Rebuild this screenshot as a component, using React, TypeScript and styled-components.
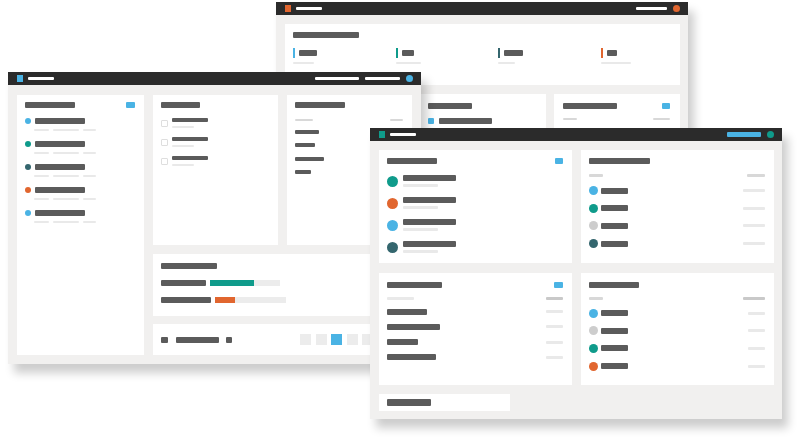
import React from "react";
import styled, { createGlobalStyle } from "styled-components";

const C = {
  dark: "#5b5b5b",
  chrome: "#2b2b2b",
  bg: "#f1f0ef",
  blue: "#4ab3e4",
  teal: "#0f9b8b",
  slate: "#34666e",
  orange: "#e1662f",
  grey: "#cdcdcd",
  line: "#d8d8d8",
  lineDark: "#c9c9c9",
  faint: "#e9e9e9",
  track: "#ececec",
};

const Global = createGlobalStyle`
  *, *::before, *::after { box-sizing: border-box; }
  html, body { margin: 0; padding: 0; background: #fff; font-family: "Liberation Sans", Arial, sans-serif; }
  #root { width: 800px; height: 440px; }
`;

const Desktop = styled.div`
  position: relative;
  width: 800px;
  height: 440px;
  overflow: hidden;
  background: #fff;
`;

const Window = styled.div<{ $x: number; $y: number; $w: number; $h: number }>`
  position: absolute;
  left: ${(p) => p.$x}px;
  top: ${(p) => p.$y}px;
  width: ${(p) => p.$w}px;
  height: ${(p) => p.$h}px;
  display: flex;
  flex-direction: column;
  background: ${C.bg};
  box-shadow: 6px 9px 9px rgba(0, 0, 0, 0.2);
`;

const TitleBar = styled.div`
  height: 13px;
  flex: none;
  background: ${C.chrome};
  display: flex;
  align-items: center;
  gap: 5px;
  padding: 0 8px 0 9px;
`;

const AppIcon = styled.span<{ $c: string }>`
  display: block;
  width: 6px;
  height: 7px;
  background: ${(p) => p.$c};
`;

const TitleTools = styled.div`
  margin-left: auto;
  display: flex;
  align-items: center;
  gap: 6px;
`;

const Bar = styled.span<{ $w: number; $h?: number; $c?: string }>`
  display: block;
  flex: none;
  width: ${(p) => p.$w}px;
  height: ${(p) => p.$h ?? 6}px;
  background: ${(p) => p.$c ?? C.dark};
  border-radius: 1px;
`;

const Dot = styled.span<{ $s: number; $c: string }>`
  display: block;
  flex: none;
  width: ${(p) => p.$s}px;
  height: ${(p) => p.$s}px;
  border-radius: 50%;
  background: ${(p) => p.$c};
`;

const Card = styled.div<{ $pad?: string }>`
  background: #fff;
  padding: ${(p) => p.$pad ?? "8px"};
  display: flex;
  flex-direction: column;
  min-width: 0;
  overflow: hidden;
`;

const Spread = styled.div<{ $mt?: number }>`
  display: flex;
  align-items: center;
  justify-content: space-between;
  margin-top: ${(p) => p.$mt ?? 0}px;
`;

const Row = styled.div<{ $gap?: number; $mt?: number }>`
  display: flex;
  align-items: center;
  gap: ${(p) => p.$gap ?? 4}px;
  margin-top: ${(p) => p.$mt ?? 0}px;
`;

const List = styled.div<{ $gap: number; $mt: number }>`
  display: flex;
  flex-direction: column;
  gap: ${(p) => p.$gap}px;
  margin-top: ${(p) => p.$mt}px;
`;

const Stack = styled.div<{ $gap: number }>`
  display: flex;
  flex-direction: column;
  gap: ${(p) => p.$gap}px;
`;

/* ---------------- Window A (back) ---------------- */

const BodyA = styled.div`
  flex: 1;
  display: flex;
  flex-direction: column;
  gap: 9px;
  padding: 9px 8px 0 9px;
`;

const SummaryCard = styled(Card)`
  height: 61px;
  flex: none;
`;

const StatGrid = styled.div`
  display: grid;
  grid-template-columns: repeat(3, 102.5px) auto;
  margin-top: 10px;
`;

const Accent = styled.span<{ $c: string }>`
  display: block;
  width: 2px;
  height: 10px;
  background: ${(p) => p.$c};
`;

const RowA = styled.div`
  display: grid;
  grid-template-columns: 1fr 1fr 1fr;
  column-gap: 8.5px;
  height: 150px;
`;

const stats = [
  { c: C.blue, w: 18, s: 21 },
  { c: C.teal, w: 12, s: 25 },
  { c: C.slate, w: 19, s: 17 },
  { c: C.orange, w: 10, s: 30 },
];

const WindowA = () => (
  <Window $x={276} $y={2} $w={412} $h={250}>
    <TitleBar>
      <AppIcon $c={C.orange} />
      <Bar $w={26} $h={3} $c="#fff" />
      <TitleTools>
        <Bar $w={31} $h={3} $c="#fff" />
        <Dot $s={7} $c={C.orange} />
      </TitleTools>
    </TitleBar>
    <BodyA>
      <SummaryCard $pad="8px">
        <Bar $w={66} />
        <StatGrid>
          {stats.map((s, i) => (
            <Stack key={i} $gap={4}>
              <Row $gap={4}>
                <Accent $c={s.c} />
                <Bar $w={s.w} />
              </Row>
              <Bar $w={s.s} $h={2} $c={C.faint} />
            </Stack>
          ))}
        </StatGrid>
      </SummaryCard>
      <RowA>
        <Card $pad="9px 8px" />
        <Card $pad="9px 8px">
          <Bar $w={44} />
          <Row $gap={5} $mt={9}>
            <Bar $w={6} $c={C.blue} />
            <Bar $w={53} />
          </Row>
        </Card>
        <Card $pad="9px 10px 9px 9px">
          <Spread>
            <Bar $w={54} />
            <Bar $w={8} $c={C.blue} />
          </Spread>
          <Spread $mt={9}>
            <Bar $w={14} $h={2} $c={C.line} />
            <Bar $w={17} $h={2} $c={C.line} />
          </Spread>
        </Card>
      </RowA>
    </BodyA>
  </Window>
);

/* ---------------- Window B (middle) ---------------- */

const BodyB = styled.div`
  flex: 1;
  display: grid;
  grid-template-columns: 127px 125px 125px;
  grid-template-rows: 150px 62px 31px;
  column-gap: 9px;
  row-gap: 8.5px;
  padding: 10px 9px 8px 9px;
`;

const SideCard = styled(Card)`
  grid-row: 1 / 4;
`;

const WideCard = styled(Card)`
  grid-column: 2 / 4;
`;

const FootCard = styled(WideCard)`
  flex-direction: row;
  align-items: center;
  padding: 0 8px;
`;

const SubLine = styled.div`
  display: flex;
  gap: 4px;
  padding-left: 9px;
  margin-top: 5px;
`;

const Check = styled.span`
  display: block;
  flex: none;
  width: 7px;
  height: 7px;
  border: 1px solid #dedede;
  border-radius: 1px;
`;

const Track = styled.div<{ $w: number }>`
  width: ${(p) => p.$w}px;
  height: 6px;
  background: ${C.track};
  display: flex;
`;

const Fill = styled.div<{ $c: string }>`
  height: 100%;
  background: ${(p) => p.$c};
`;

const Pager = styled.div`
  margin-left: auto;
  display: flex;
  gap: 4.5px;
`;

const Page = styled.span<{ $on?: boolean }>`
  display: block;
  width: 11px;
  height: 11px;
  background: ${(p) => (p.$on ? C.blue : C.track)};
`;

const sideItems = [C.blue, C.teal, C.slate, C.orange, C.blue];
const checkItems = [0, 1, 2];
const col3Bars = [24, 20, 29, 16];

const WindowB = () => (
  <Window $x={8} $y={72} $w={413} $h={292}>
    <TitleBar>
      <AppIcon $c={C.blue} />
      <Bar $w={26} $h={3} $c="#fff" />
      <TitleTools>
        <Bar $w={44} $h={3} $c="#fff" />
        <Bar $w={35} $h={3} $c="#fff" />
        <Dot $s={7} $c={C.blue} />
      </TitleTools>
    </TitleBar>
    <BodyB>
      <SideCard $pad="7px 9px 0 8px">
        <Spread>
          <Bar $w={50} />
          <Bar $w={9} $c={C.blue} />
        </Spread>
        <List $gap={10} $mt={10}>
          {sideItems.map((c, i) => (
            <div key={i}>
              <Row $gap={4}>
                <Dot $s={6} $c={c} />
                <Bar $w={50} />
              </Row>
              <SubLine>
                <Bar $w={15} $h={2} $c={C.faint} />
                <Bar $w={26} $h={2} $c={C.faint} />
                <Bar $w={13} $h={2} $c={C.faint} />
              </SubLine>
            </div>
          ))}
        </List>
      </SideCard>
      <Card $pad="7px 8px">
        <Bar $w={39} />
        <List $gap={9} $mt={10}>
          {checkItems.map((i) => (
            <Row key={i} $gap={4}>
              <Check />
              <Stack $gap={4}>
                <Bar $w={36} $h={4} />
                <Bar $w={22} $h={2} $c={C.faint} />
              </Stack>
            </Row>
          ))}
        </List>
      </Card>
      <Card $pad="7px 9px 0 8px">
        <Bar $w={50} />
        <Spread $mt={11}>
          <Bar $w={18} $h={2} $c={C.line} />
          <Bar $w={13} $h={2} $c={C.line} />
        </Spread>
        <List $gap={9.3} $mt={9}>
          {col3Bars.map((w, i) => (
            <Bar key={i} $w={w} $h={4} />
          ))}
        </List>
      </Card>
      <WideCard $pad="9px 8px">
        <Bar $w={56} />
        <List $gap={11} $mt={11}>
          <Row $gap={4}>
            <Bar $w={45} />
            <Track $w={70}>
              <Fill $c={C.teal} style={{ width: "63%" }} />
            </Track>
          </Row>
          <Row $gap={4}>
            <Bar $w={50} />
            <Track $w={71}>
              <Fill $c={C.orange} style={{ width: "28%" }} />
            </Track>
          </Row>
        </List>
      </WideCard>
      <FootCard>
        <Row $gap={7.5}>
          <Bar $w={7} />
          <Bar $w={43} />
          <Bar $w={6} />
        </Row>
        <Pager>
          <Page />
          <Page />
          <Page $on />
          <Page />
          <Page />
          <Page />
          <Page />
        </Pager>
      </FootCard>
    </BodyB>
  </Window>
);

/* ---------------- Window C (front) ---------------- */

const BodyC = styled.div`
  flex: 1;
  display: grid;
  grid-template-columns: 1fr 1fr;
  grid-template-rows: 113px 112px 17px;
  column-gap: 9px;
  row-gap: 9.5px;
  padding: 9px 8px 8px 9px;
`;

const NoteCard = styled(Card)`
  width: 131px;
  padding: 0 8px;
  justify-content: center;
`;

const people = [C.teal, C.orange, C.blue, C.slate];
const legendTop = [C.blue, C.teal, C.grey, C.slate];
const legendBottom = [C.blue, C.grey, C.teal, C.orange];
const tableBars = [40, 53, 31, 49];

const Legend = ({ colors, right }: { colors: string[]; right: number }) => (
  <List $gap={8.7} $mt={9}>
    {colors.map((c, i) => (
      <Row key={i} $gap={3}>
        <Dot $s={9} $c={c} />
        <Bar $w={27} />
        <Bar $w={right} $h={3} $c={C.faint} style={{ marginLeft: "auto" }} />
      </Row>
    ))}
  </List>
);

const WindowC = () => (
  <Window $x={370} $y={128} $w={412} $h={291}>
    <TitleBar>
      <AppIcon $c={C.teal} />
      <Bar $w={26} $h={3} $c="#fff" />
      <TitleTools>
        <Bar $w={34} $h={5} $c={C.blue} />
        <Dot $s={7} $c={C.teal} />
      </TitleTools>
    </TitleBar>
    <BodyC>
      <Card $pad="8px 9px 0 8px">
        <Spread>
          <Bar $w={50} />
          <Bar $w={8} $c={C.blue} />
        </Spread>
        <List $gap={10} $mt={11}>
          {people.map((c, i) => (
            <Row key={i} $gap={5}>
              <Dot $s={11} $c={c} />
              <Stack $gap={3}>
                <Bar $w={53} />
                <Bar $w={35} $h={3} $c={C.faint} />
              </Stack>
            </Row>
          ))}
        </List>
      </Card>
      <Card $pad="8px 9px 0 8px">
        <Bar $w={61} />
        <Spread $mt={10}>
          <Bar $w={14} $h={3} $c={C.line} />
          <Bar $w={18} $h={3} $c={C.line} />
        </Spread>
        <Legend colors={legendTop} right={22} />
      </Card>
      <Card $pad="9px 9px 0 8px">
        <Spread>
          <Bar $w={55} />
          <Bar $w={9} $c={C.blue} />
        </Spread>
        <Spread $mt={9}>
          <Bar $w={27} $h={3} $c={C.faint} />
          <Bar $w={17} $h={3} $c={C.lineDark} />
        </Spread>
        <List $gap={9.3} $mt={9}>
          {tableBars.map((w, i) => (
            <Spread key={i}>
              <Bar $w={w} />
              <Bar $w={17} $h={3} $c={C.faint} />
            </Spread>
          ))}
        </List>
      </Card>
      <Card $pad="9px 9px 0 8px">
        <Bar $w={50} />
        <Spread $mt={9}>
          <Bar $w={14} $h={3} $c={C.line} />
          <Bar $w={22} $h={3} $c={C.lineDark} />
        </Spread>
        <Legend colors={legendBottom} right={17} />
      </Card>
      <NoteCard>
        <Bar $w={44} $h={7} />
      </NoteCard>
    </BodyC>
  </Window>
);

export default function App() {
  return (
    <>
      <Global />
      <Desktop>
        <WindowA />
        <WindowB />
        <WindowC />
      </Desktop>
    </>
  );
}
